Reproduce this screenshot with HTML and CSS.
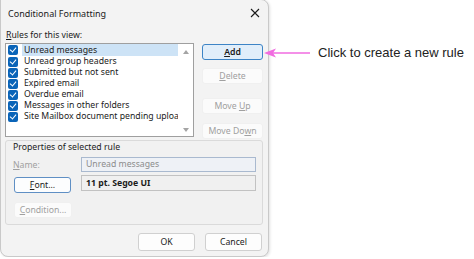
FILE: index.html
```html
<!DOCTYPE html>
<html lang="en">

<head>
  <meta charset="UTF-8">
  <meta name="viewport" content="width=device-width, initial-scale=1.0">
  <title>Conditional Formatting</title>

  <link rel="stylesheet" href="styles.css">
</head>

<body>
  <div class="dialog">
    <div class="dialog__title">
      <span>Conditional Formatting</span>
      <svg class="dialog__close" width="10" height="10" viewBox="0 0 10 10">
        <path d="M1 1 L9 9 M9 1 L1 9" stroke="#1a1a1a" stroke-width="1.1" fill="none" />
      </svg>
    </div>

    <div class="dialog__body">
      <div class="rules__label"><u>R</u>ules for this view:</div>

      <div class="rules">
        <div class="rules__list">
          <div class="rules__items">
            <div class="rule rule--selected"><span class="check"></span><span class="rule__text">Unread messages</span></div>
            <div class="rule"><span class="check"></span><span class="rule__text">Unread group headers</span></div>
            <div class="rule"><span class="check"></span><span class="rule__text">Submitted but not sent</span></div>
            <div class="rule"><span class="check"></span><span class="rule__text">Expired email</span></div>
            <div class="rule"><span class="check"></span><span class="rule__text">Overdue email</span></div>
            <div class="rule"><span class="check"></span><span class="rule__text">Messages in other folders</span></div>
            <div class="rule"><span class="check"></span><span class="rule__text">Site Mailbox document pending upload</span></div>
          </div>
          <div class="rules__scroll">
            <span class="arrow arrow--up"></span>
            <span class="arrow arrow--down"></span>
          </div>
        </div>

        <div class="rules__buttons">
          <button class="btn btn--add"><u>A</u>dd</button>
          <button class="btn btn--off btn--delete"><u>D</u>elete</button>
          <button class="btn btn--off btn--up">Move <u>U</u>p</button>
          <button class="btn btn--off btn--down">Move Do<u>w</u>n</button>
        </div>
      </div>

      <div class="props">
        <div class="props__title">Properties of selected rule</div>
        <div class="props__row">
          <span class="props__label"><u>N</u>ame:</span>
          <div class="field field--name">Unread messages</div>
        </div>
        <div class="props__row props__row--font">
          <button class="btn btn--focus btn--font"><u>F</u>ont...</button>
          <div class="field field--font">11 pt. Segoe UI</div>
        </div>
        <button class="btn btn--off btn--cond"><u>C</u>ondition...</button>
      </div>

      <div class="dialog__footer">
        <button class="btn btn--footer">OK</button>
        <button class="btn btn--footer">Cancel</button>
      </div>
    </div>
  </div>

  <div class="callout">
    <svg class="callout__arrow" width="46" height="10" viewBox="0 0 46 10">
      <path d="M4 5 L46 5" stroke="#f16be0" stroke-width="1.6" />
      <path d="M0 5 L12 0.5 L9 5 L12 9.5 Z" fill="#f16be0" />
    </svg>
    <span class="callout__text">Click to create a new rule</span>
  </div>
</body>

</html>
```

FILE: styles.css
```css
* {
  box-sizing: border-box;
}

body {
  margin: 0;
  background: #fff;
  font-family: "Noto Sans", "Open Sans", sans-serif;
  font-size: 8.7px;
  color: #1b1b1b;
}

u {
  text-decoration-thickness: 1px;
  text-underline-offset: 1px;
}

.dialog {
  width: 269px;
  height: 258px;
  margin-top: -1px;
  background: #f3f3f3;
  border: 1px solid #c9c9c9;
  border-radius: 0 8px 8px 8px;
  box-shadow: 1px 1px 3px rgba(0, 0, 0, 0.12);
}

.dialog__title {
  display: flex;
  align-items: center;
  justify-content: space-between;
  height: 26px;
  padding: 0 8px 0 7px;
  font-size: 9px;
  color: #1a1a1a;
}

.dialog__body {
  padding: 0 5px 0 4px;
}

.rules__label {
  height: 12px;
  margin-top: 3px;
  padding-left: 1px;
  line-height: 12px;
}

.rules {
  display: flex;
  gap: 8px;
  margin-top: 2px;
}

.rules__list {
  display: flex;
  width: 189px;
  height: 94px;
  background: #fff;
  border: 1px solid #9f9f9f;
}

.rules__items {
  flex: 1;
  overflow: hidden;
  padding-left: 2px;
}

.rule {
  display: flex;
  align-items: center;
  height: 11px;
  white-space: nowrap;
}

.rule:first-child {
  height: 12px;
}

.check {
  flex: none;
  position: relative;
  width: 10px;
  height: 10px;
  margin-right: 4px;
  background: #0a64b8;
  border-radius: 2px;
}

.check::after {
  content: "";
  position: absolute;
  left: 3px;
  top: 1px;
  width: 3px;
  height: 5px;
  border: solid #fff;
  border-width: 0 1.4px 1.4px 0;
  transform: rotate(40deg);
}

.rule__text {
  flex: 1;
  height: 100%;
  padding-left: 2px;
  line-height: 11px;
  overflow: hidden;
}

.rule--selected .rule__text {
  background: #cde3f6;
  line-height: 12px;
}

.rules__scroll {
  display: flex;
  flex-direction: column;
  justify-content: space-between;
  align-items: center;
  width: 15px;
  padding: 6px 0 4px;
}

.arrow {
  width: 0;
  height: 0;
  border-left: 3.5px solid transparent;
  border-right: 3.5px solid transparent;
}

.arrow--up {
  border-bottom: 4px solid #a4a4a4;
}

.arrow--down {
  border-top: 4px solid #a4a4a4;
}

.rules__buttons {
  display: flex;
  flex-direction: column;
  width: 61px;
  padding-top: 1px;
}

.btn {
  height: 16px;
  padding: 0;
  font-family: inherit;
  font-size: 8.7px;
  color: #1b1b1b;
  background: #fdfdfd;
  border: 1px solid #d4d4d4;
  border-radius: 3px;
}

.btn--add {
  background: #e1eefa;
  border: 1.5px solid #3d84c6;
  font-weight: 600;
}

.btn--off {
  color: #a0a0a0;
  background: #fbfbfb;
  border-color: #f0f0f0;
}

.btn--delete {
  margin-top: 8px;
}

.btn--up {
  margin-top: 14px;
}

.btn--down {
  margin-top: 9px;
}

.props {
  height: 85px;
  margin-top: 1px;
  padding: 0 6px 0 7px;
  background: #f1f1f1;
  border: 1px solid #dadada;
  border-radius: 3px;
}

.props__title {
  height: 12px;
  line-height: 12px;
}

.props__row {
  display: flex;
  align-items: center;
  justify-content: space-between;
  margin-top: 4px;
}

.props__label {
  color: #a0a0a0;
}

.field {
  width: 175px;
  height: 15px;
  padding-left: 4px;
  line-height: 13px;
  background: #f0f0f0;
  border: 1px solid #c2c2c2;
}

.field--name {
  color: #8c8c8c;
  background: #eef1f6;
  border-color: #a9b9cf;
}

.props__row--font {
  align-items: flex-start;
  margin-top: 3px;
}

.field--font {
  height: 16px;
  line-height: 14px;
  font-weight: 700;
}

.btn--font {
  width: 57px;
  margin: 2px 0 0 1px;
  background: #fcfdfe;
  border: 1.5px solid #5f8fc4;
}

.btn--cond {
  width: 58px;
  margin: 9px 0 0 1px;
}

.dialog__footer {
  display: flex;
  justify-content: flex-end;
  gap: 10px;
  margin-top: 8px;
  padding-right: 1px;
}

.btn--footer {
  width: 57px;
  height: 18px;
  background: #fdfdfd;
  border-color: #d0d0d0;
}

.callout {
  position: absolute;
  left: 264px;
  top: 45px;
  display: flex;
  align-items: center;
  gap: 8px;
}

.callout__text {
  font-family: "Liberation Sans", Arial, sans-serif;
  font-size: 13px;
  color: #222;
}
```
